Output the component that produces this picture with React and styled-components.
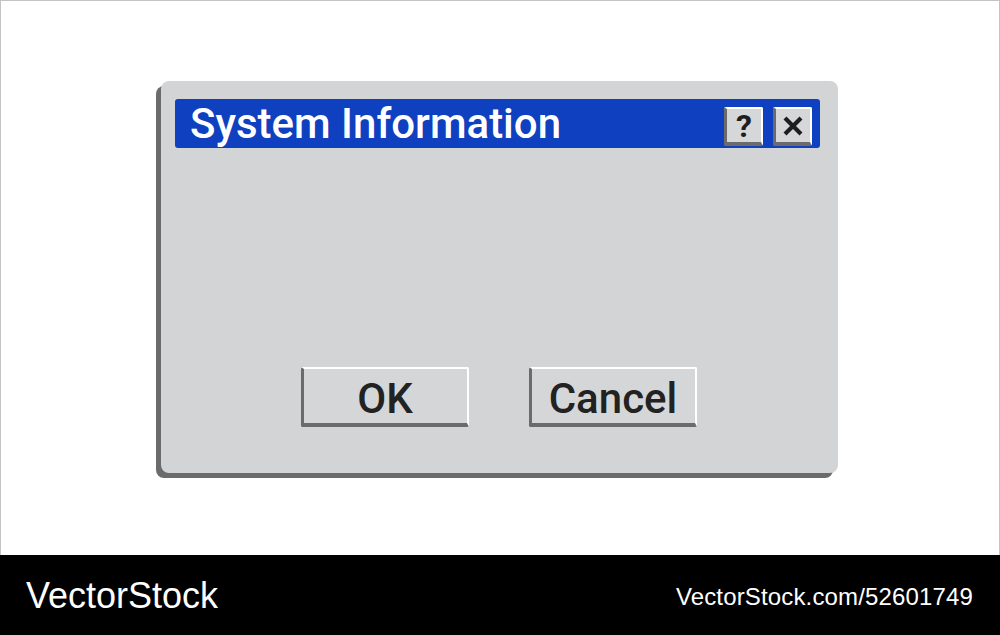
import React from "react";
import styled, { createGlobalStyle } from "styled-components";

const Global = createGlobalStyle`
  html, body { margin: 0; padding: 0; background: #ffffff; }
  #root { width: 1000px; height: 635px; overflow: hidden; }
`;

const Page = styled.div`
  width: 1000px;
  height: 635px;
  display: flex;
  flex-direction: column;
  font-family: Roboto, "Liberation Sans", sans-serif;
`;

const Canvas = styled.div`
  height: 555px;
  box-sizing: border-box;
  border: 1px solid #c4c4c4;
  border-bottom: none;
  background: #ffffff;
  padding: 80px 0 0 160px;
  display: flex;
  align-items: flex-start;
`;

const Dialog = styled.div`
  width: 677px;
  height: 392px;
  box-sizing: border-box;
  background: #d3d4d6;
  border-radius: 8px;
  box-shadow: -5px 5px 0 #6b6b6b;
  padding: 18px 18px 0 14px;
  display: flex;
  flex-direction: column;
`;

const TitleBar = styled.div`
  height: 49px;
  background: #0e40bf;
  border-radius: 3px;
  display: flex;
  align-items: center;
  padding: 0 8px 0 15px;
`;

const Title = styled.div`
  flex: 1;
  color: #ffffff;
  font-size: 42px;
  font-weight: 500;
  letter-spacing: 0;
  line-height: 1;
  margin-top: 1px;
`;

const TitleButtons = styled.div`
  display: flex;
  gap: 10px;
  margin-top: 5px;
`;

const SmallButton = styled.div`
  width: 39px;
  height: 39px;
  box-sizing: border-box;
  background: #d6d7d9;
  border-top: 2px solid #ffffff;
  border-right: 2px solid #ffffff;
  border-left: 3px solid #6b6b6b;
  border-bottom: 4px solid #6b6b6b;
  border-radius: 2px;
  display: flex;
  align-items: center;
  justify-content: center;
  color: #1e1e1e;
  font-size: 32px;
  font-weight: 700;
  line-height: 1;
  padding-top: 1px;
`;

const ButtonRow = styled.div`
  display: flex;
  justify-content: center;
  gap: 60px;
  margin-top: 219px;
  padding-left: 2px;
`;

const Button = styled.div`
  width: 168px;
  height: 60px;
  box-sizing: border-box;
  background: #d5d6d8;
  border-top: 2px solid #ffffff;
  border-right: 2px solid #ffffff;
  border-left: 3px solid #6b6b6b;
  border-bottom: 4px solid #6b6b6b;
  border-radius: 2px;
  display: flex;
  align-items: center;
  justify-content: center;
  color: #222222;
  font-size: 42px;
  font-weight: 500;
  line-height: 1;
  padding-top: 5px;
`;

const Footer = styled.div`
  height: 80px;
  background: #000000;
  display: flex;
  align-items: center;
  justify-content: space-between;
  padding: 0 27px 0 26px;
  font-family: "Liberation Sans", Arial, sans-serif;
  color: #ffffff;
`;

const Brand = styled.div`
  font-size: 36px;
  letter-spacing: 0;
  transform: scaleY(1.05);
`;

const Ref = styled.div`
  font-size: 24px;
  letter-spacing: 0.15px;
  margin-top: 4px;
`;

const CloseIcon = () => (
  <svg width="22" height="22" viewBox="0 0 22 22">
    <path d="M3 3 L19 19 M19 3 L3 19" stroke="#1e1e1e" strokeWidth="4.2" strokeLinecap="butt" />
  </svg>
);

export default function App() {
  return (
    <Page>
      <Global />
      <Canvas>
        <Dialog>
          <TitleBar>
            <Title>System Information</Title>
            <TitleButtons>
              <SmallButton>?</SmallButton>
              <SmallButton>
                <CloseIcon />
              </SmallButton>
            </TitleButtons>
          </TitleBar>
          <ButtonRow>
            <Button>OK</Button>
            <Button>Cancel</Button>
          </ButtonRow>
        </Dialog>
      </Canvas>
      <Footer>
        <Brand>VectorStock</Brand>
        <Ref>VectorStock.com/52601749</Ref>
      </Footer>
    </Page>
  );
}
